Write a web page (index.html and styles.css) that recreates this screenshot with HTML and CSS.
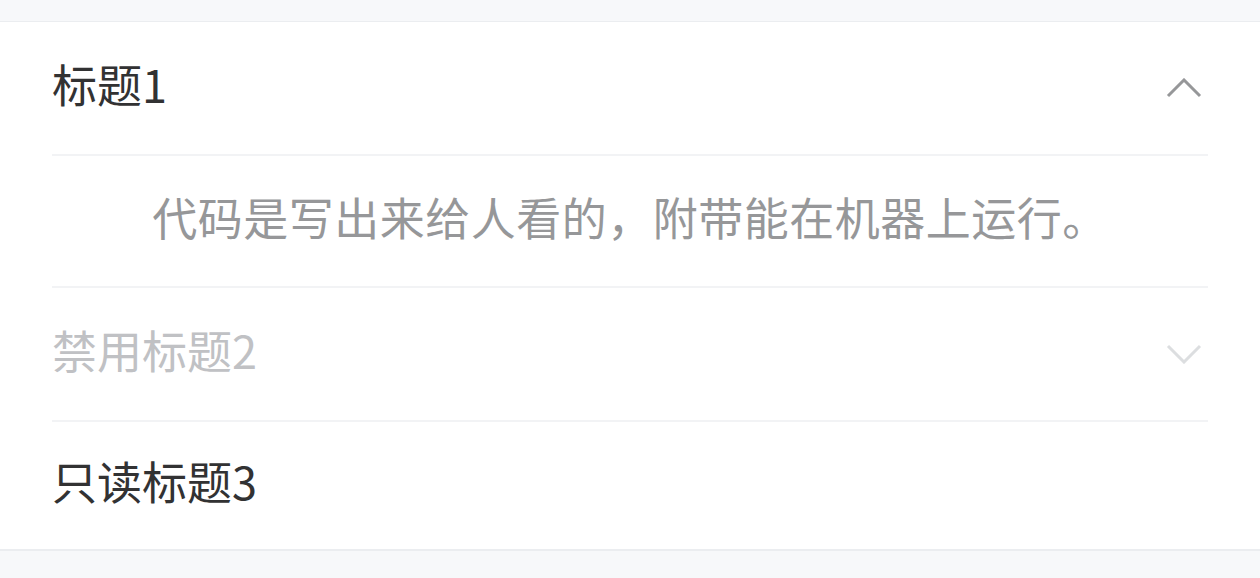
FILE: index.html
```html
<!DOCTYPE html>
<html lang="zh-CN">
<head>
    <meta charset="UTF-8">
    <meta name="viewport" content="width=device-width, initial-scale=1.0">
    <title>Collapse</title>
    <link rel="stylesheet" href="styles.css">
</head>
<body>
    <div class="collapse">
        <div class="collapse-item">
            <div class="item-title">
                <span>标题1</span>
                <svg class="arrow" width="36" height="20" viewBox="0 0 36 20"><path d="M2 18 L18 2 L34 18" /></svg>
            </div>
            <div class="item-content">代码是写出来给人看的，附带能在机器上运行。</div>
        </div>
        <div class="collapse-item disabled">
            <div class="item-title">
                <span>禁用标题2</span>
                <svg class="arrow" width="36" height="20" viewBox="0 0 36 20"><path d="M2 2 L18 18 L34 2" /></svg>
            </div>
        </div>
        <div class="collapse-item readonly">
            <div class="item-title">
                <span>只读标题3</span>
            </div>
        </div>
    </div>
</body>
</html>
```

FILE: styles.css
```css
body {
    margin: 0;
    padding: 21px 0 0;
    background: #f7f8fa;
    font-family: "Noto Sans CJK SC", "Noto Sans", sans-serif;
}
.collapse {
    background: #fff;
    border-top: 1px solid #ebedf0;
    border-bottom: 2px solid #ebedf0;
}
.collapse-item {
    margin: 0 52px;
}
.collapse-item + .collapse-item {
    border-top: 2px solid #f2f3f5;
}
.item-title {
    box-sizing: border-box;
    height: 132px;
    padding-bottom: 10px;
    display: flex;
    align-items: center;
    justify-content: space-between;
    font-size: 45px;
    color: #323233;
}
.arrow {
    margin: 10px 6px 0 0;
    fill: none;
    stroke: #969799;
    stroke-width: 3;
}
.item-content {
    box-sizing: border-box;
    height: 132px;
    padding-bottom: 10px;
    border-top: 2px solid #f2f3f5;
    display: flex;
    align-items: center;
    justify-content: center;
    font-size: 45px;
    letter-spacing: 0.5px;
    color: #969799;
}
.disabled .item-title {
    color: #c0c1c4;
}
.disabled .arrow {
    stroke: #dcdee0;
}
.readonly .item-title {
    height: 127px;
}
```
